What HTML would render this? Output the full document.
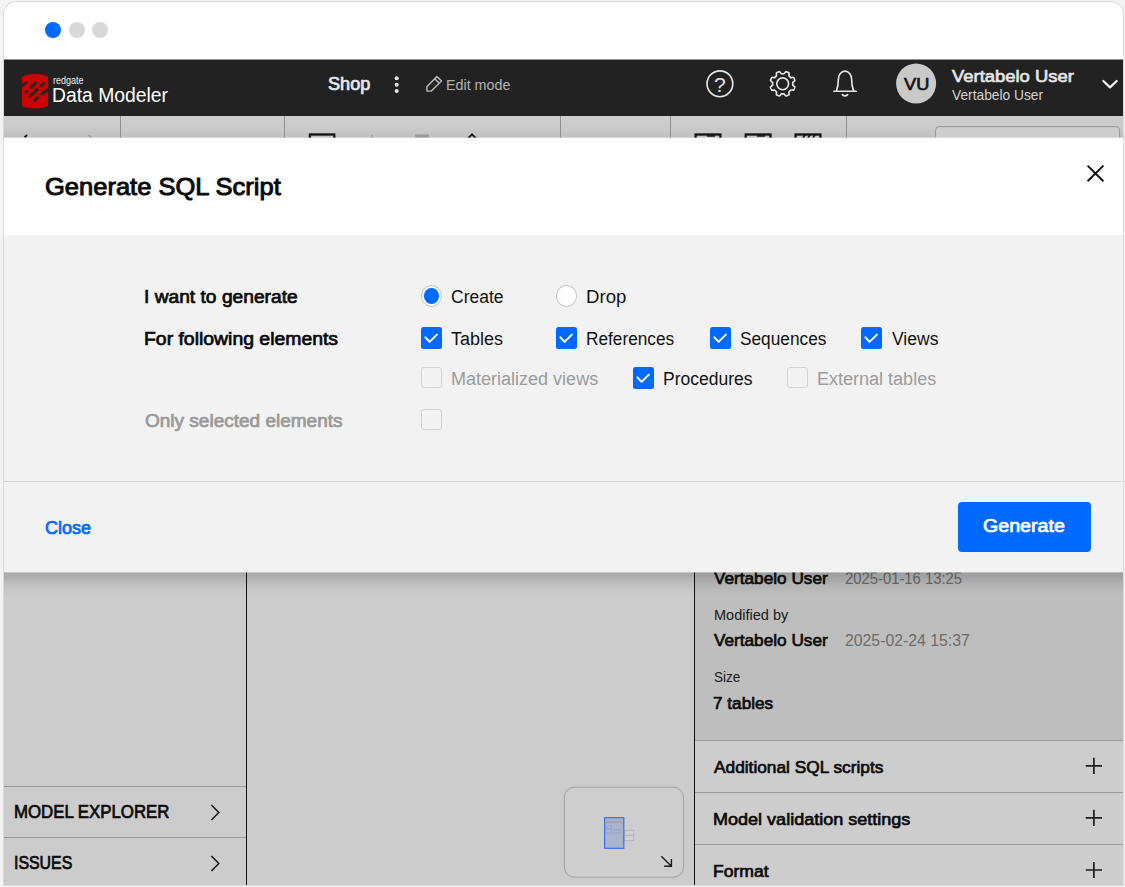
<!DOCTYPE html>
<html lang="en">
<head>
<meta charset="utf-8">
<title>Generate SQL Script</title>
<style>
*{box-sizing:border-box;margin:0;padding:0}
html,body{width:1125px;height:887px;overflow:hidden;background:#f3f3f3;font-family:"Liberation Sans",sans-serif;}
.abs{position:absolute}
#win{position:absolute;left:4px;top:2px;width:1119px;height:883px;background:#fff;border-radius:13px 13px 0 0;overflow:hidden;}
#winshadow{position:absolute;left:4px;top:2px;width:1119px;height:883px;border-radius:13px 13px 0 0;box-shadow:0 0 0 1px #dadada;}
.t{position:absolute;white-space:nowrap;line-height:1;transform-origin:0 0;}
.b{font-weight:bold}
.dot{position:absolute;top:20px;width:16px;height:16px;border-radius:50%;background:#d9d9d9}
#hdr{position:absolute;left:0;top:58px;width:1119px;height:56px;background:#222}
#tool{position:absolute;left:0;top:114px;width:1119px;height:22px;background:linear-gradient(#cdcdcd 0,#cccccc 45%,#c0c0c0 100%);overflow:hidden}
.vd{position:absolute;top:0;width:1px;height:30px;background:#8f8f8f}
#under{position:absolute;left:0;top:570px;width:1119px;height:313px;background:#cccccc;overflow:hidden}
#modal{position:absolute;left:0;top:136px;width:1119px;height:434px;background:#f2f2f2}
#mhead{position:absolute;left:0;top:0;width:1119px;height:97px;background:#fff}
#msep{position:absolute;left:0;top:343px;width:1119px;height:1px;background:#d4d4d4}
.cb{position:absolute;width:21px;height:22px;border-radius:2.5px;background:#0069ff}
.cb svg{position:absolute;left:0;top:0}
.cbd{position:absolute;width:21px;height:21px;border-radius:3px;background:#f3f3f3;border:1px solid #d3d3d3}
.rd{position:absolute;width:21px;height:22px;border-radius:50%;background:#fff;border:1px solid #c9c9c9}
.rd i{position:absolute;left:2.1px;top:2.2px;width:14.8px;height:15.6px;border-radius:50%;background:#0069ff}
#btn{position:absolute;left:954px;top:364px;width:133px;height:50px;border-radius:4px;background:#0069ff}
.hl{position:absolute;height:1px;background:#9b9b9b}
</style>
</head>
<body>
<div id="winshadow"></div>
<div id="win">
  <!-- window chrome -->
  <div class="dot" style="left:41px;background:#0069ff"></div>
  <div class="dot" style="left:64.5px"></div>
  <div class="dot" style="left:88px"></div>

  <!-- dark header -->
  <div class="abs" style="left:0;top:57px;width:1119px;height:1px;background:#8f8f8f"></div>
  <div id="hdr">
    <svg class="abs" style="left:0;top:0" width="1119" height="56" viewBox="4 60 1119 56" fill="none">
<defs><clipPath id="cyl"><path d="M21.9 77.6 A13.1 3.5 0 0 1 48.1 77.6 V105 A13.1 3.5 0 0 1 21.9 105 Z"/></clipPath></defs>
<path d="M21.9 77.6 A13.1 3.5 0 0 1 48.1 77.6 V105 A13.1 3.5 0 0 1 21.9 105 Z" fill="#cc0000"/>
<g clip-path="url(#cyl)" stroke="#222" stroke-width="2.9" stroke-linecap="round"><path d="M20.5 86.6 L26.2 82.6"/><path d="M30.4 87.3 L35.5 82.9"/><path d="M41.2 85.4 L43.3 83.3"/><path d="M26 92.1 L26.9 91.3"/><path d="M30.1 96.1 L37.2 89.4"/><path d="M41.2 94 L49.5 88.6"/><path d="M34.4 100.4 L37.6 97.8"/></g>
<circle cx="396.7" cy="78.3" r="2" fill="#e6e6e6"/>
<circle cx="396.7" cy="84.7" r="2" fill="#e6e6e6"/>
<circle cx="396.7" cy="90.9" r="2" fill="#e6e6e6"/>
<path d="M436.9 76.5 L441.5 81 L431.3 91.1 H426.9 V86.7 Z M434.7 78.7 L439.3 83.2" stroke="#bdbdbd" stroke-width="1.45" stroke-linejoin="round"/>
<circle cx="719.9" cy="83.8" r="12.9" stroke="#e6e6e6" stroke-width="1.65"/>
<text x="719.9" y="91.6" text-anchor="middle" font-family="Liberation Sans, sans-serif" font-size="21" fill="#e4e4e4">?</text>
<path d="M794.34 88.62 L794.18 89.00 L794.00 89.37 L793.81 89.74 L793.61 90.10 L792.94 90.17 L792.14 90.11 L791.35 90.00 L790.71 89.95 L790.51 90.21 L790.29 90.46 L790.07 90.70 L789.84 90.94 L789.60 91.17 L789.36 91.39 L789.11 91.61 L788.85 91.81 L788.90 92.45 L789.01 93.24 L789.07 94.04 L789.00 94.71 L788.64 94.91 L788.27 95.10 L787.90 95.28 L787.52 95.44 L787.14 95.59 L786.75 95.73 L786.36 95.86 L785.96 95.97 L785.44 95.55 L784.91 94.93 L784.43 94.30 L784.02 93.81 L783.69 93.85 L783.36 93.88 L783.03 93.89 L782.70 93.90 L782.37 93.89 L782.04 93.88 L781.71 93.85 L781.38 93.81 L780.97 94.30 L780.49 94.93 L779.96 95.55 L779.44 95.97 L779.04 95.86 L778.65 95.73 L778.26 95.59 L777.88 95.44 L777.50 95.28 L777.13 95.10 L776.76 94.91 L776.40 94.71 L776.33 94.04 L776.39 93.24 L776.50 92.45 L776.55 91.81 L776.29 91.61 L776.04 91.39 L775.80 91.17 L775.56 90.94 L775.33 90.70 L775.11 90.46 L774.89 90.21 L774.69 89.95 L774.05 90.00 L773.26 90.11 L772.46 90.17 L771.79 90.10 L771.59 89.74 L771.40 89.37 L771.22 89.00 L771.06 88.62 L770.91 88.24 L770.77 87.85 L770.64 87.46 L770.53 87.06 L770.95 86.54 L771.57 86.01 L772.20 85.53 L772.69 85.12 L772.65 84.79 L772.62 84.46 L772.61 84.13 L772.60 83.80 L772.61 83.47 L772.62 83.14 L772.65 82.81 L772.69 82.48 L772.20 82.07 L771.57 81.59 L770.95 81.06 L770.53 80.54 L770.64 80.14 L770.77 79.75 L770.91 79.36 L771.06 78.98 L771.22 78.60 L771.40 78.23 L771.59 77.86 L771.79 77.50 L772.46 77.43 L773.26 77.49 L774.05 77.60 L774.69 77.65 L774.89 77.39 L775.11 77.14 L775.33 76.90 L775.56 76.66 L775.80 76.43 L776.04 76.21 L776.29 75.99 L776.55 75.79 L776.50 75.15 L776.39 74.36 L776.33 73.56 L776.40 72.89 L776.76 72.69 L777.13 72.50 L777.50 72.32 L777.88 72.16 L778.26 72.01 L778.65 71.87 L779.04 71.74 L779.44 71.63 L779.96 72.05 L780.49 72.67 L780.97 73.30 L781.38 73.79 L781.71 73.75 L782.04 73.72 L782.37 73.71 L782.70 73.70 L783.03 73.71 L783.36 73.72 L783.69 73.75 L784.02 73.79 L784.43 73.30 L784.91 72.67 L785.44 72.05 L785.96 71.63 L786.36 71.74 L786.75 71.87 L787.14 72.01 L787.52 72.16 L787.90 72.32 L788.27 72.50 L788.64 72.69 L789.00 72.89 L789.07 73.56 L789.01 74.36 L788.90 75.15 L788.85 75.79 L789.11 75.99 L789.36 76.21 L789.60 76.43 L789.84 76.66 L790.07 76.90 L790.29 77.14 L790.51 77.39 L790.71 77.65 L791.35 77.60 L792.14 77.49 L792.94 77.43 L793.61 77.50 L793.81 77.86 L794.00 78.23 L794.18 78.60 L794.34 78.98 L794.49 79.36 L794.63 79.75 L794.76 80.14 L794.87 80.54 L794.45 81.06 L793.83 81.59 L793.20 82.07 L792.71 82.48 L792.75 82.81 L792.78 83.14 L792.79 83.47 L792.80 83.80 L792.79 84.13 L792.78 84.46 L792.75 84.79 L792.71 85.12 L793.20 85.53 L793.83 86.01 L794.45 86.54 L794.87 87.06 L794.76 87.46 L794.63 87.85 L794.49 88.24 L794.34 88.62Z" stroke="#e6e6e6" stroke-width="1.65" stroke-linejoin="round"/>
<circle cx="782.7" cy="83.8" r="5.9" stroke="#e6e6e6" stroke-width="1.65"/>
<path d="M833.8 91.2 H856.2 M836.3 91.2 Q838.4 86 838.4 79 A6.6 7.9 0 0 1 851.6 79 Q851.6 86 853.7 91.2" stroke="#e6e6e6" stroke-width="1.65" stroke-linecap="round" stroke-linejoin="round"/>
<path d="M842.3 94.6 Q845 97.3 847.7 94.6" stroke="#e6e6e6" stroke-width="1.65" stroke-linecap="round"/>
<circle cx="916.1" cy="83.5" r="20" fill="#c9c9c9"/>
<path d="M1103.3 81 L1110 87.4 L1116.7 81" stroke="#f2f2f2" stroke-width="2.2" stroke-linecap="round" stroke-linejoin="round"/>
</svg>
  </div>

  <!-- dimmed toolbar strip -->
  <div id="tool">
    <div class="vd" style="left:115.5px"></div>
<div class="vd" style="left:279.5px"></div>
<div class="vd" style="left:555.5px"></div>
<div class="vd" style="left:666.2px"></div>
<div class="vd" style="left:842.2px"></div>
<svg class="abs" style="left:0;top:0" width="1119" height="22" viewBox="4 116 1119 22" fill="none">
<rect x="309.9" y="134.5" width="24.4" height="14" stroke="#111" stroke-width="2.3"/>
<rect x="371.6" y="134.8" width="1" height="4" fill="#8a8a8a"/>
<rect x="415" y="134.4" width="14" height="6" fill="#9a9a9a"/>
<path d="M467 139.5 L472 134.3 L477 139.5" stroke="#111" stroke-width="1.8"/>
<rect x="695.6" y="134.5" width="24.8" height="14" stroke="#111" stroke-width="2.3"/>
<rect x="745.7" y="134.5" width="24.8" height="14" stroke="#111" stroke-width="2.3"/>
<rect x="795.6" y="134.5" width="24.8" height="14" stroke="#111" stroke-width="2.3"/>
<path d="M707 136 h8 M757 136 h8 M803 138 l2-3 M808 138 l2-3 M813 138 l2-3" stroke="#111" stroke-width="1.6"/>
<path d="M24.5 137.5 L27 135" stroke="#111" stroke-width="1.8"/>
<path d="M88.5 135 L91.5 137.5" stroke="#9a9a9a" stroke-width="1.6"/>
<rect x="935.6" y="126.6" width="184" height="30" rx="3.5" stroke="#989898" stroke-width="1" fill="#cdcdcd"/>
</svg>
  </div>

  <!-- dimmed app under the modal -->
  <div id="under">
    <div class="abs" style="left:691px;top:0;width:428px;height:168.5px;background:#bebebe"></div>
<div class="abs" style="left:691px;top:168.5px;width:428px;height:150px;background:#cdcdcd"></div>
<div class="abs" style="left:241.7px;top:0;width:1.5px;height:313px;background:#111"></div>
<div class="abs" style="left:689.7px;top:0;width:1.5px;height:313px;background:#111"></div>
<div class="hl" style="left:0;top:213.9px;width:242px"></div>
<div class="hl" style="left:0;top:264.7px;width:242px"></div>
<div class="hl" style="left:691px;top:168.0px;width:428px"></div>
<div class="hl" style="left:691px;top:219.8px;width:428px"></div>
<div class="hl" style="left:691px;top:271.9px;width:428px"></div>
<svg class="abs" style="left:0;top:0" width="1119" height="313" viewBox="4 572 1119 313" fill="none">
<path d="M211.4 804.9 L218.8 812.5 L211.4 820.1" stroke="#151515" stroke-width="1.5" stroke-linejoin="miter"/>
<path d="M211.4 855.9 L218.8 863.5 L211.4 871.1" stroke="#151515" stroke-width="1.5" stroke-linejoin="miter"/>
<path d="M1085.8 765.8 H1102 M1093.9 757.6999999999999 V773.9" stroke="#1c1c1c" stroke-width="1.7"/>
<path d="M1085.8 817.9 H1102 M1093.9 809.8 V826.0" stroke="#1c1c1c" stroke-width="1.7"/>
<path d="M1085.8 870 H1102 M1093.9 861.9 V878.1" stroke="#1c1c1c" stroke-width="1.7"/>
<rect x="564.4" y="787.2" width="119" height="90" rx="10" stroke="#a2a2a2" stroke-width="1" fill="#cecece"/>
<rect x="624.5" y="830.3" width="9.2" height="5" stroke="#b4b4b4" stroke-width="1" fill="#d2d2d2"/>
<rect x="624.5" y="835.6" width="9.2" height="5" stroke="#b4b4b4" stroke-width="1" fill="#d2d2d2"/>
<rect x="604.6" y="817.7" width="19.2" height="30.6" stroke="#3f6fe3" stroke-width="1.2" fill="#a9b5cf"/>
<rect x="605.6" y="820.8" width="17" height="2.4" fill="#a3a79c"/>
<rect x="605.8" y="826" width="5.6" height="2.6" stroke="#9aa3bd" stroke-width=".8"/>
<rect x="605.8" y="829.8" width="6" height="3.2" stroke="#9aa3bd" stroke-width=".8"/>
<rect x="614.4" y="829.8" width="6" height="3.2" stroke="#9aa3bd" stroke-width=".8"/>
<path d="M661.3 856.2 L671.2 866 M664.2 866.2 H671.4 V859" stroke="#1a1a1a" stroke-width="1.4"/>
</svg>
<div class="t" id="r1" style="left:710.21px;top:-2px;font-size:16.4px;color:#0a0a0a;-webkit-text-stroke:0.66px #0a0a0a;transform:scaleX(1.0484)">Vertabelo User</div>
<div class="t" id="d1" style="left:840.78px;top:-2px;font-size:16.4px;color:#6c6c6c;transform:scaleX(0.9046)">2025-01-16 13:25</div>
<div class="abs" style="left:0;top:0;width:1119px;height:28px;background:linear-gradient(rgba(0,0,0,.185) 0,rgba(0,0,0,.165) 2.6px,rgba(0,0,0,.113) 7.6px,rgba(0,0,0,.059) 12.6px,rgba(0,0,0,.022) 17.6px,rgba(0,0,0,.006) 22.6px,rgba(0,0,0,0) 27px)"></div>
  </div>

  <!-- half-pixel soft edges of the dialog -->
  <div class="abs" style="left:0;top:135px;width:1119px;height:1px;background:rgba(255,255,255,.32)"></div>
  <div class="abs" style="left:0;top:570px;width:1119px;height:1px;background:rgba(242,242,242,.42)"></div>

  <!-- modal dialog -->
  <div id="modal">
    <div id="mhead"></div>
    <div id="msep"></div>
    <div class="rd" style="left:417.0px;top:147.0px"><i></i></div>
<div class="rd" style="left:552.0px;top:147.0px"></div>
<div class="cb" style="left:417.0px;top:189.0px"><svg width="21" height="22" viewBox="0 0 21 22" fill="none"><path d="M4.4 10.4 L8.6 14.9 L15.9 7.6" stroke="#fff" stroke-width="2" stroke-linecap="round" stroke-linejoin="round"/></svg></div>
<div class="cb" style="left:552.0px;top:189.0px"><svg width="21" height="22" viewBox="0 0 21 22" fill="none"><path d="M4.4 10.4 L8.6 14.9 L15.9 7.6" stroke="#fff" stroke-width="2" stroke-linecap="round" stroke-linejoin="round"/></svg></div>
<div class="cb" style="left:706.0px;top:189.0px"><svg width="21" height="22" viewBox="0 0 21 22" fill="none"><path d="M4.4 10.4 L8.6 14.9 L15.9 7.6" stroke="#fff" stroke-width="2" stroke-linecap="round" stroke-linejoin="round"/></svg></div>
<div class="cb" style="left:857.0px;top:189.0px"><svg width="21" height="22" viewBox="0 0 21 22" fill="none"><path d="M4.4 10.4 L8.6 14.9 L15.9 7.6" stroke="#fff" stroke-width="2" stroke-linecap="round" stroke-linejoin="round"/></svg></div>
<div class="cbd" style="left:417.0px;top:229.0px"></div>
<div class="cb" style="left:629.0px;top:228.6px"><svg width="21" height="22" viewBox="0 0 21 22" fill="none"><path d="M4.4 10.4 L8.6 14.9 L15.9 7.6" stroke="#fff" stroke-width="2" stroke-linecap="round" stroke-linejoin="round"/></svg></div>
<div class="cbd" style="left:783.0px;top:229.0px"></div>
<div class="cbd" style="left:417.0px;top:271.0px"></div>
<div id="btn"></div>
<svg class="abs" style="left:1082px;top:26px" width="20" height="20" viewBox="1086 164 20 20" fill="none"><path d="M1087.6 165.6 L1103.4 181.2 M1103.4 165.6 L1087.6 181.2" stroke="#111" stroke-width="2"/></svg>
  </div>

  <div class="t" id="title" style="left:41.43px;top:173px;font-size:24px;color:#0a0a0a;-webkit-text-stroke:0.96px #0a0a0a;transform:scaleX(1.0626)">Generate SQL Script</div>
<div class="t" id="redgate" style="left:48.78px;top:74px;font-size:10.4px;color:#f0f0f0;transform:scaleX(0.8664)">redgate</div>
<div class="t" id="dm" style="left:47.89px;top:84px;font-size:19.6px;color:#ffffff;transform:scaleX(0.9863)">Data Modeler</div>
<div class="t" id="shop" style="left:324.49px;top:74px;font-size:17.5px;color:#e8e8e8;-webkit-text-stroke:0.70px #e8e8e8;transform:scaleX(1.0353)">Shop</div>
<div class="t" id="edit" style="left:442.24px;top:76px;font-size:14.6px;color:#b2b2b2;transform:scaleX(0.9796)">Edit mode</div>
<div class="t" id="vu" style="left:900.41px;top:74px;font-size:17px;color:#141414;-webkit-text-stroke:0.68px #141414;transform:scaleX(1.0712)">VU</div>
<div class="t" id="name1" style="left:948.41px;top:66px;font-size:17px;color:#e6e6e6;-webkit-text-stroke:0.68px #e6e6e6;transform:scaleX(1.0834)">Vertabelo User</div>
<div class="t" id="name2" style="left:947.87px;top:86px;font-size:14.6px;color:#d2d2d2;transform:scaleX(0.9438)">Vertabelo User</div>
<div class="t" id="l1" style="left:140.00px;top:286px;font-size:18px;color:#0a0a0a;-webkit-text-stroke:0.72px #0a0a0a;transform:scaleX(1.0663)">I want to generate</div>
<div class="t" id="l2" style="left:140.12px;top:328px;font-size:18px;color:#0a0a0a;-webkit-text-stroke:0.72px #0a0a0a;transform:scaleX(1.0776)">For following elements</div>
<div class="t" id="l3" style="left:140.85px;top:410px;font-size:18px;color:#9a9a9a;-webkit-text-stroke:0.72px #9a9a9a;transform:scaleX(1.0557)">Only selected elements</div>
<div class="t" id="create" style="left:446.72px;top:286px;font-size:18px;color:#111;transform:scaleX(0.9730)">Create</div>
<div class="t" id="drop" style="left:581.64px;top:286px;font-size:18px;color:#111;transform:scaleX(1.0346)">Drop</div>
<div class="t" id="tables" style="left:447.35px;top:328px;font-size:18px;color:#111;transform:scaleX(0.9968)">Tables</div>
<div class="t" id="refs" style="left:581.76px;top:328px;font-size:18px;color:#111;transform:scaleX(0.9577)">References</div>
<div class="t" id="seq" style="left:735.86px;top:328px;font-size:18px;color:#111;transform:scaleX(0.9589)">Sequences</div>
<div class="t" id="views" style="left:888.48px;top:328px;font-size:18px;color:#111;transform:scaleX(0.9726)">Views</div>
<div class="t" id="mat" style="left:446.69px;top:368px;font-size:18px;color:#9c9c9c;transform:scaleX(1.0006)">Materialized views</div>
<div class="t" id="proc" style="left:658.94px;top:368px;font-size:18px;color:#111;transform:scaleX(0.9721)">Procedures</div>
<div class="t" id="ext" style="left:813.39px;top:368px;font-size:18px;color:#9c9c9c;transform:scaleX(1.0008)">External tables</div>
<div class="t" id="close" style="left:41.04px;top:517px;font-size:18px;color:#0069ff;-webkit-text-stroke:0.72px #0069ff;transform:scaleX(0.9997)">Close</div>
<div class="t" id="gen" style="left:979.29px;top:515px;font-size:18px;color:#ffffff;-webkit-text-stroke:0.72px #ffffff;transform:scaleX(1.0902)">Generate</div>
<div class="t" id="mod" style="left:710.02px;top:606px;font-size:14.6px;color:#1a1a1a;transform:scaleX(0.9954)">Modified by</div>
<div class="t" id="r2" style="left:710.21px;top:630px;font-size:16.4px;color:#0a0a0a;-webkit-text-stroke:0.66px #0a0a0a;transform:scaleX(1.0484)">Vertabelo User</div>
<div class="t" id="d2" style="left:840.74px;top:630px;font-size:16.4px;color:#6c6c6c;transform:scaleX(0.9639)">2025-02-24 15:37</div>
<div class="t" id="size" style="left:710.13px;top:668px;font-size:14.6px;color:#1a1a1a;transform:scaleX(0.9292)">Size</div>
<div class="t" id="t7" style="left:709.47px;top:693px;font-size:16.4px;color:#0a0a0a;-webkit-text-stroke:0.66px #0a0a0a;transform:scaleX(1.0471)">7 tables</div>
<div class="t" id="a1" style="left:710.24px;top:758px;font-size:16.6px;color:#0a0a0a;-webkit-text-stroke:0.66px #0a0a0a;transform:scaleX(1.0411)">Additional SQL scripts</div>
<div class="t" id="a2" style="left:708.75px;top:810px;font-size:16.6px;color:#0a0a0a;-webkit-text-stroke:0.66px #0a0a0a;transform:scaleX(1.0861)">Model validation settings</div>
<div class="t" id="a3" style="left:708.78px;top:862px;font-size:16.6px;color:#0a0a0a;-webkit-text-stroke:0.66px #0a0a0a;transform:scaleX(1.0588)">Format</div>
<div class="t" id="me" style="left:10.29px;top:801px;font-size:18px;color:#0a0a0a;-webkit-text-stroke:0.72px #0a0a0a;transform:scaleX(0.9341)">MODEL EXPLORER</div>
<div class="t" id="iss" style="left:10.24px;top:852px;font-size:18px;color:#0a0a0a;-webkit-text-stroke:0.72px #0a0a0a;transform:scaleX(0.8832)">ISSUES</div>
</div>
</body>
</html>
